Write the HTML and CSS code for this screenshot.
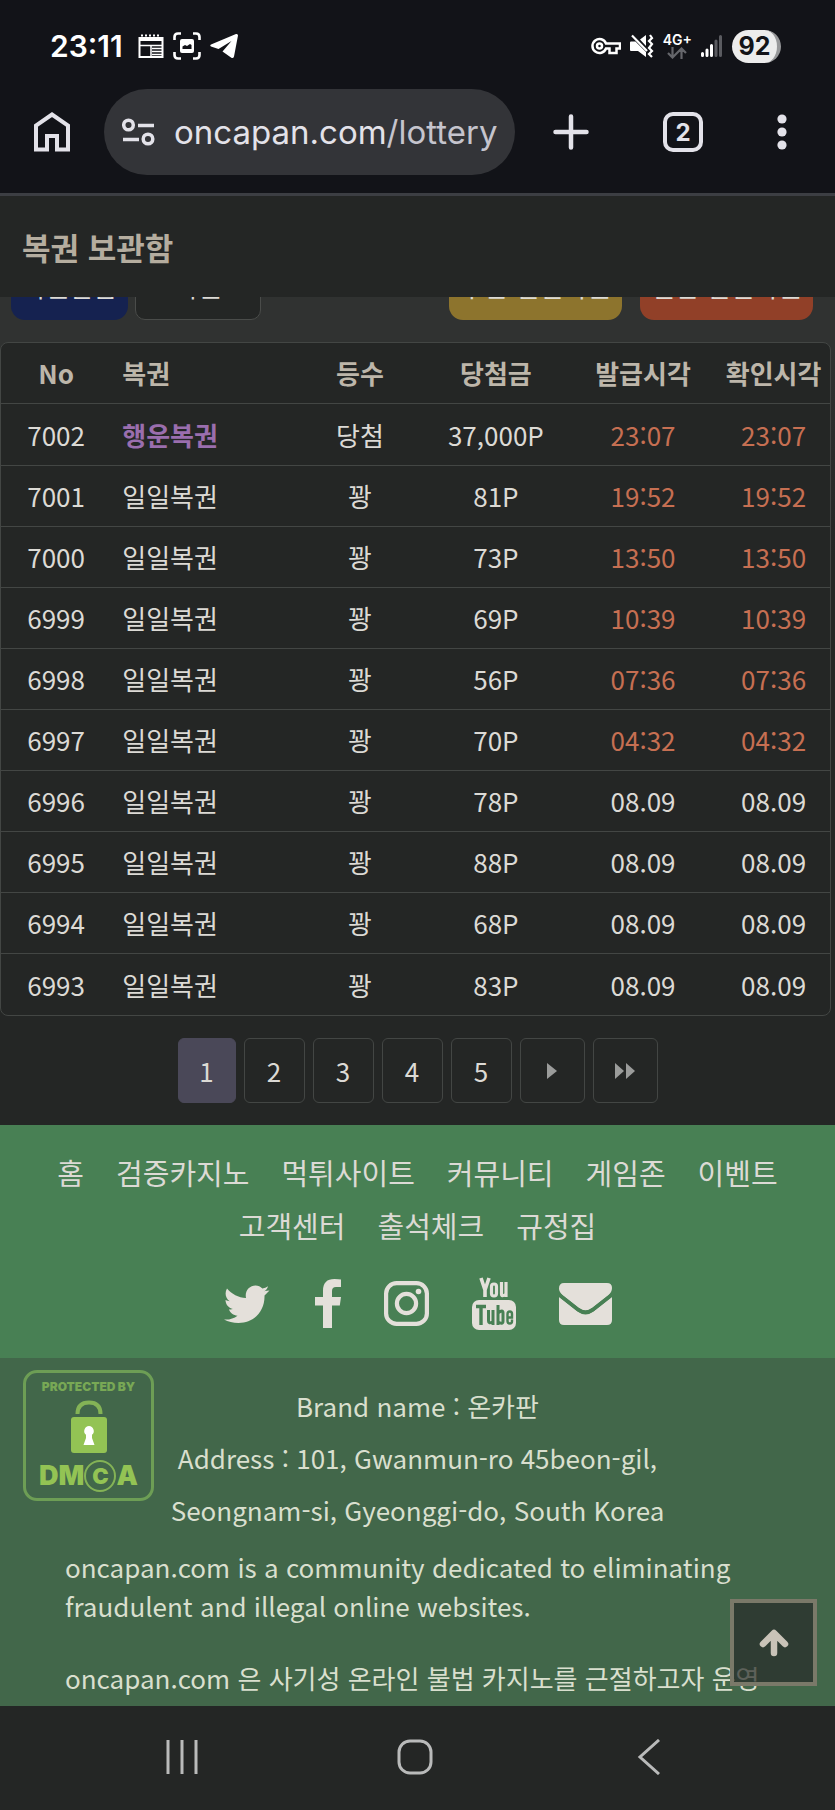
FILE: index.html
```html
<!DOCTYPE html>
<html lang="ko">
<head>
<meta charset="utf-8">
<meta name="viewport" content="width=device-width, initial-scale=1">
<title>복권 보관함</title>
<link rel="stylesheet" href="styles.css">
</head>
<body>
<div class="screen">
  <div class="browser">
    <div class="status">
      <span class="clock">23:11</span>
      <div class="status-left">
        <svg width="26" height="26" viewBox="0 0 26 26" fill="none" stroke="#fff" stroke-width="2"><path d="M1.500 4v20h23V4"/><path d="M1 6h24" stroke-width="4"/><path d="M3 2.500h20" stroke-dasharray="2 2"/><path d="M2 12.500h22M13 12.500V24" stroke-width="1.500"/><path d="M14 15.500h10M14 18.500h10M14 21.500h10" stroke-width="1.500"/></svg>
        <svg width="28" height="28" viewBox="0 0 28 28" fill="none" stroke="#fff" stroke-width="2.600"><path d="M1.500 8V5q0-3.500 3.500-3.500h3M20 1.500h3q3.500 0 3.500 3.500v3M26.500 20v3q0 3.500-3.500 3.500h-3M8 26.500H5q-3.500 0-3.500-3.500v-3"/><rect x="7" y="7" width="14" height="14" rx="2" fill="#fff" stroke="none"/><path d="M9.500 17v-2.500l2.500-1.500 2 1 3-2 1.500 1v4z" fill="#121318" stroke="none"/></svg>
        <svg width="28" height="26" viewBox="0 0 28 26"><path d="M1 11.500 26 1q2-.5 2 1.500l-4 21q-.8 2.500-3 1L12.500 18.500l9-10.500L8.500 16 1 13.500q-1.500-1 0-2z" fill="#fff"/></svg>
      </div>
      <div class="status-right">
        <svg width="30" height="18" viewBox="0 0 30 18" fill="none" stroke="#fff"><path d="M15 6.500A7 7 0 1 0 15 11.500h3.500V16h7v-4.500H29v-5z" stroke-width="2.500"/><circle cx="8.500" cy="9" r="2.500" stroke-width="2.500"/></svg>
        <svg width="24" height="24" viewBox="0 0 24 24"><path d="M0 8.500q0-1 1-1h4.500l10.500 10.500v5L8 17H1q-1 0-1-1zM10 5.500 16 1v11z" fill="#fff"/><path d="M2 1.500 17 17M20 1l2 3-3 3 3 3-3 4 3 3-3 3 3 3" fill="none" stroke="#fff" stroke-width="2.200"/></svg>
        <div class="net"><span>4G+</span><svg width="20" height="12" viewBox="0 0 20 12" fill="none" stroke="#65666b" stroke-width="2.200"><path d="M5.500 0v10M1 6l4.500 4.500L10 6M14.500 12V1.500M10 6l4.500-4.500L19 6"/></svg></div>
        <svg width="22" height="24" viewBox="0 0 22 24" stroke-width="3" stroke-linecap="round"><path d="M1.500 19.500v2M6 16v5.500M10.500 11.500v10" stroke="#fff"/><path d="M15 7v14.500M19.500 2.500v19" stroke="#5a5b60"/></svg>
        <span class="battery">92</span>
      </div>
    </div>
    <div class="toolbar">
      <button class="icon-btn" aria-label="홈"><svg width="36" height="40" viewBox="0 0 36 40" fill="none" stroke="#e3e2e9" stroke-width="4"><path d="M2 37.500V13.500L18 2.500l16 11v24H23V24H13v13.500z"/></svg></button>
      <div class="url-box">
        <svg width="33" height="28" viewBox="0 0 33 28" fill="none" stroke="#e3e2e9" stroke-width="3.500"><circle cx="6.500" cy="7" r="4.800"/><path d="M16 7.500h16M1 21.500h16"/><circle cx="26" cy="21" r="4.800"/></svg>
        <span class="url">oncapan.com<span class="path">/lottery</span></span>
      </div>
      <div class="actions">
        <button class="icon-btn" aria-label="새 탭"><svg width="36" height="36" viewBox="0 0 36 36" stroke="#e3e2e9" stroke-width="4.500" stroke-linecap="round"><path d="M18 2.500v31M2.500 18h31"/></svg></button>
        <button class="icon-btn tabs" aria-label="탭 2개">2</button>
        <button class="icon-btn" aria-label="메뉴"><svg width="10" height="36" viewBox="0 0 10 36" fill="#e3e2e9"><circle cx="5" cy="5" r="4.600"/><circle cx="5" cy="18" r="4.600"/><circle cx="5" cy="31" r="4.600"/></svg></button>
      </div>
    </div>
  </div>

  <header class="title-bar"><h1>복권 보관함</h1></header>

  <main>
    <div class="list">
      <div class="filters">
        <button class="tab active">복권발급</button>
        <button class="tab outline">복권</button>
        <button class="buy gold">주간 일일복권</button>
        <button class="buy red">일반 일일복권</button>
      </div>
      <table class="lots">
        <thead><tr><th class="c-no">No</th><th class="c-name">복권</th><th class="c-rank">등수</th><th class="c-prize">당첨금</th><th class="c-issued">발급시각</th><th class="c-checked">확인시각</th></tr></thead>
        <tbody>
          <tr class="win"><td>7002</td><td class="c-name">행운복권</td><td>당첨</td><td>37,000P</td><td class="today">23:07</td><td class="today">23:07</td></tr>
          <tr><td>7001</td><td class="c-name">일일복권</td><td>꽝</td><td>81P</td><td class="today">19:52</td><td class="today">19:52</td></tr>
          <tr><td>7000</td><td class="c-name">일일복권</td><td>꽝</td><td>73P</td><td class="today">13:50</td><td class="today">13:50</td></tr>
          <tr><td>6999</td><td class="c-name">일일복권</td><td>꽝</td><td>69P</td><td class="today">10:39</td><td class="today">10:39</td></tr>
          <tr><td>6998</td><td class="c-name">일일복권</td><td>꽝</td><td>56P</td><td class="today">07:36</td><td class="today">07:36</td></tr>
          <tr><td>6997</td><td class="c-name">일일복권</td><td>꽝</td><td>70P</td><td class="today">04:32</td><td class="today">04:32</td></tr>
          <tr><td>6996</td><td class="c-name">일일복권</td><td>꽝</td><td>78P</td><td>08.09</td><td>08.09</td></tr>
          <tr><td>6995</td><td class="c-name">일일복권</td><td>꽝</td><td>88P</td><td>08.09</td><td>08.09</td></tr>
          <tr><td>6994</td><td class="c-name">일일복권</td><td>꽝</td><td>68P</td><td>08.09</td><td>08.09</td></tr>
          <tr><td>6993</td><td class="c-name">일일복권</td><td>꽝</td><td>83P</td><td>08.09</td><td>08.09</td></tr>
        </tbody>
      </table>
    </div>
    <nav class="pages" aria-label="페이지">
      <a class="page current" href="#p1">1</a>
      <a class="page" href="#p2">2</a>
      <a class="page" href="#p3">3</a>
      <a class="page" href="#p4">4</a>
      <a class="page" href="#p5">5</a>
      <a class="page step" href="#next" aria-label="다음"><svg width="10" height="18" viewBox="0 0 10 18" fill="#9b9c9b"><path d="M0 1v16l10-8z"/></svg></a>
      <a class="page step" href="#last" aria-label="마지막"><svg width="20" height="18" viewBox="0 0 20 18" fill="#9b9c9b"><path d="M0 1v16l9-8zM11 1v16l9-8z"/></svg></a>
    </nav>
  </main>

  <footer>
    <div class="footer-top">
      <nav class="links">
        <a href="#home">홈</a><a href="#casino">검증카지노</a><a href="#scam">먹튀사이트</a><a href="#community">커뮤니티</a><a href="#games">게임존</a><a href="#events">이벤트</a><a href="#help">고객센터</a><a href="#attend">출석체크</a><a href="#rules">규정집</a>
      </nav>
      <div class="social">
        <a href="#tw" aria-label="Twitter"><svg width="46" height="38" viewBox="0 0 46 38" fill="#e4e0da"><path d="M45.500 5.500l-5 5C41 25 31 38 14.500 38 9 38 4 36.600 0 34.500c5 .5 9.800-1 13.500-3.800-4-.2-7.500-2.700-8.600-6.400 1.400.3 2.700.2 4-.2C4.500 23 1.500 19.300 1.500 15c1.300.7 2.700 1.100 4.200 1.200C1.500 13 .4 7.800 3 3.500 7.500 9 14.500 12.700 22 13 20.500 6 25.500.5 31.500.5c2.700 0 5 1 6.800 3 2.100-.4 4-1.200 5.800-2.300-.7 2.300-2 4-3.900 5.100 1.900-.2 3.600-.7 5.300-.8z"/></svg></a>
        <a href="#fb" aria-label="Facebook"><svg width="28" height="49" viewBox="-2 0 28 49" fill="#e4e0da"><path d="M26 .5V8h-5q-4 0-4 4v6h9l-1.200 8.500H17V49H8V26.500H0V18h8v-6.500Q8 0 19.500 0 24 0 26 .5z"/></svg></a>
        <a href="#ig" aria-label="Instagram"><svg width="45" height="45" viewBox="0 0 45 45" fill="none" stroke="#e4e0da" stroke-width="4.200"><rect x="2.100" y="2.100" width="40.800" height="40.800" rx="10.500"/><circle cx="22.500" cy="22.500" r="9.600"/><circle cx="34.500" cy="10.500" r="2.800" fill="#e4e0da" stroke="none"/></svg></a>
        <a class="youtube" href="#yt" aria-label="YouTube"><svg width="44" height="53" viewBox="0 0 44 53"><rect x="0" y="23" width="44" height="30" rx="7" fill="#e4e0da"/><path d="M9 1l4 12v7M17 1l-4 12" fill="none" stroke="#e4e0da" stroke-width="3.600"/><rect x="19.500" y="7" width="5" height="12" rx="2.500" fill="none" stroke="#e4e0da" stroke-width="3.200"/><path d="M29.500 5v12q0 3 4 .5M34 5v15" fill="none" stroke="#e4e0da" stroke-width="3.200"/><g fill="none" stroke="#488054"><path d="M4 29.500h10M9 29v19" stroke-width="3.400"/><path d="M16.500 33v11q0 3 4 1M21 33v15M26 28v20M26 36q5-4 5 0v8q0 4-5 1" stroke-width="3"/><path d="M35.500 40.500H40V37q0-2.500-2.200-2.500t-2.300 2.500v7q0 2.500 2.300 2.500T40 44v-1.500" stroke-width="2.400"/></g></svg></a>
        <a href="#mail" aria-label="이메일"><svg width="53" height="42" viewBox="0 0 53 42" fill="#e4e0da"><path d="M5 0h43q5 0 5 5 0 4-4 7.500L33 25q-6.500 5-13 0L4 12.500Q0 9 0 5.500 0 0 5 0z"/><path d="M0 14 18.500 28.500q8 6 16 0L53 14V37q0 5-5 5H5q-5 0-5-5z"/><path d="M0 11.500 19 26.500q7.500 5.500 15 0L53 11.500" fill="none" stroke="#488054" stroke-width="3.500"/></svg></a>
      </div>
    </div>
    <div class="footer-info">
      <a class="dmca" href="#dmca" aria-label="DMCA">
        <span class="dmca-top">PROTECTED BY</span>
        <svg width="36" height="53" viewBox="0 0 36 53"><path d="M6.500 14q0-11.500 11.500-11.500T29.500 14" fill="none" stroke="#84b356" stroke-width="4"/><rect y="17" width="36" height="36" rx="3" fill="#93c354"/><path d="M18 26a5 5 0 0 1 3 8.800V38l2.500 7h-11l2.500-7v-3.200A5 5 0 0 1 18 26z" fill="#fff"/></svg>
        <span class="dmca-name">DM<span class="ring">C</span>A</span>
      </a>
      <address>
        <p>Brand name : 온카판</p>
        <p>Address : 101, Gwanmun-ro 45beon-gil, Seongnam-si, Gyeonggi-do, South Korea</p>
      </address>
      <div class="about">
        <p>oncapan.com is a community dedicated to eliminating fraudulent and illegal online websites.</p>
        <p>oncapan.com 은 사기성 온라인 불법 카지노를 근절하고자 운영</p>
      </div>
      <button class="to-top" aria-label="맨 위로"><svg width="30" height="28" viewBox="0 0 30 28" fill="none" stroke="#c9c3b8" stroke-width="6.500" stroke-linecap="round" stroke-linejoin="round"><path d="M15 24V5M4 15 15 4l11 11"/></svg></button>
    </div>
  </footer>

  <div class="system-nav">
    <button class="icon-btn" aria-label="최근 앱"><svg width="32" height="34" viewBox="0 0 32 34" stroke="#b9baba" stroke-width="3"><path d="M2 0v34M16 0v34M30 0v34"/></svg></button>
    <button class="icon-btn" aria-label="홈 화면"><svg width="36" height="36" viewBox="0 0 36 36" fill="none" stroke="#b9baba" stroke-width="3"><rect x="2" y="2" width="32" height="32" rx="11"/></svg></button>
    <button class="icon-btn" aria-label="뒤로"><svg width="24" height="36" viewBox="0 0 24 36" fill="none" stroke="#b9baba" stroke-width="3"><path d="M22 1 3 18l19 17"/></svg></button>
  </div>
</div>
</body>
</html>
```
FILE: styles.css
```css
* { box-sizing: border-box; }

body {
  margin: 0;
  background: #242625;
  color: #dcdad5;
  font-family: "Noto Sans CJK KR", "Noto Sans", sans-serif;
  font-size: 26px;
}

h1, p, address { margin: 0; font-style: normal; }
a { color: inherit; text-decoration: none; }
button { font: inherit; color: inherit; border: 0; padding: 0; background: none; }
svg { display: block; }

/* Browser chrome */
.browser {
  padding-bottom: 18px;
  background: #121318;
  border-bottom: 3px solid #3c3e43;
  font-family: Inter, Roboto, sans-serif;
}
.status {
  display: flex;
  align-items: center;
  height: 89px;
  padding: 3px 54px 0 50px;
}
.clock { font-size: 30px; font-weight: 600; color: #fff; }
.status-left { display: flex; align-items: center; gap: 9px; margin-left: 15px; }
.status-right { display: flex; align-items: center; gap: 9px; margin-left: auto; }
.net {
  display: flex;
  flex-direction: column;
  align-items: center;
  color: #fff;
  font-size: 14px;
  font-weight: 600;
  line-height: 14px;
}
.battery {
  width: 49px;
  height: 33px;
  border-radius: 17px;
  border-right: 4px solid #97989a;
  background: #ececec;
  color: #121318;
  font-size: 25px;
  font-weight: 700;
  line-height: 33px;
  text-align: center;
}
.toolbar {
  display: flex;
  align-items: center;
  padding: 0 48px 0 34px;
}
.icon-btn { display: flex; align-items: center; justify-content: center; }
.actions { display: flex; align-items: center; gap: 74px; }
.url-box {
  display: flex;
  flex: 1;
  align-items: center;
  gap: 19px;
  min-width: 0;
  height: 86px;
  margin: 0 38px 0 34px;
  padding: 0 17px 0 18px;
  border-radius: 43px;
  background: #333438;
  color: #e3e2e9;
  font-size: 33px;
}
.url-box svg { flex: none; }
.url { overflow: hidden; white-space: nowrap; line-height: 44px; }
.path { color: #c5c4cd; }
.tabs {
  width: 40px;
  height: 40px;
  border: 4px solid #e3e2e9;
  border-radius: 10px;
  color: #e3e2e9;
  font-size: 24px;
  font-weight: 700;
}

/* Page title */
.title-bar {
  padding: 26px 22px;
  background: #242625;
}
.title-bar h1 { color: #b5ad9f; font-size: 31px; font-weight: 700; line-height: 49px; }

/* Lottery list */
.list { background: linear-gradient(#303231 0, #303231 50px, #242625 260px); }
.filters {
  display: flex;
  align-items: flex-end;
  height: 45px;
  padding: 0 22px 22px 11px;
  overflow: hidden;
}
.filters button {
  flex: none;
  height: 68px;
  font-size: 26px;
  line-height: 38px;
  border-radius: 14px;
}
.tab.active { width: 117px; background: #152250; }
.filters .outline {
  width: 126px;
  margin: 0 auto 0 7px;
  border: 1px solid #4a4c4a;
  border-radius: 10px;
  background: #242625;
}
.buy { width: 173px; }
.gold { background: #8d742d; }
.red { margin-left: 18px; background: #914028; }

.lots {
  width: calc(100% - 4px);
  table-layout: fixed;
  border-collapse: separate;
  border-spacing: 0;
  border: 1px solid #434644;
  border-radius: 8px;
  background: #242625;
  line-height: 38px;
  text-align: center;
  white-space: nowrap;
}
.lots th, .lots td { height: 61px; padding: 0; border-bottom: 1px solid #434644; }
.lots tr:last-child td { border-bottom: 0; }
.lots th { color: #bdb6aa; font-weight: 700; }
.lots .c-name { padding-left: 11px; text-align: left; }
.c-no { width: 13.3%; }
th.c-name { width: 22.4%; }
.c-rank { width: 15.2%; }
.c-prize { width: 17.6%; }
.c-issued { width: 17.9%; }
.c-checked { width: 13.6%; }
.lots .win td { height: 62px; }
.win .c-name { color: #9a6eae; font-weight: 700; }
.today { color: #c66f52; }

/* Pagination */
.pages {
  display: flex;
  justify-content: center;
  gap: 8px;
  padding: 22px 0;
}
.page {
  display: flex;
  align-items: center;
  justify-content: center;
  width: 61px;
  height: 65px;
  border: 1px solid #434644;
  border-radius: 6px;
}
.current { width: 58px; border-color: #4a4858; background: #4a4858; }
.step { width: 65px; }

/* Footer */
.footer-top { padding: 21px 40px 27px; background: #488054; }
.links {
  display: flex;
  flex-wrap: wrap;
  justify-content: center;
  column-gap: 32px;
  font-size: 29px;
  line-height: 53px;
}
.social {
  display: flex;
  justify-content: center;
  align-items: center;
  gap: 43px;
  height: 79px;
  padding-top: 24px;
}
.footer-info {
  position: relative;
  padding: 22px 65px 9px;
  background: #42674a;
  color: #d9dfce;
}
address { padding: 0 100px; line-height: 52px; text-align: center; }
.about { padding-top: 11px; line-height: 39px; }
.about p + p { margin-top: 33px; white-space: nowrap; }
.dmca {
  position: absolute;
  top: 12px;
  left: 23px;
  display: flex;
  flex-direction: column;
  align-items: center;
  width: 131px;
  height: 131px;
  padding-top: 8px;
  border: 3px solid #6d9e55;
  border-radius: 14px;
  color: #93c354;
  font-family: Inter, "Liberation Sans", sans-serif;
  font-weight: 900;
}
.dmca-top { margin-bottom: 7px; color: #78a855; font-size: 12px; line-height: 12px; white-space: nowrap; }
.dmca-name { display: flex; align-items: center; margin-top: 7px; font-size: 27px; line-height: 32px; }
.ring {
  width: 32px;
  height: 32px;
  border: 2px solid #84b356;
  border-radius: 50%;
  font-size: 22px;
  line-height: 28px;
  text-align: center;
}
.to-top {
  position: absolute;
  right: 18px;
  bottom: 20px;
  display: flex;
  align-items: center;
  justify-content: center;
  width: 87px;
  height: 87px;
  border: 4px solid #7a7969;
  background: rgba(40, 43, 41, 0.7);
}

/* System navigation */
.system-nav {
  display: grid;
  grid-template-columns: repeat(3, 1fr);
  height: 104px;
  padding: 0 69px 2px 65px;
}
```
